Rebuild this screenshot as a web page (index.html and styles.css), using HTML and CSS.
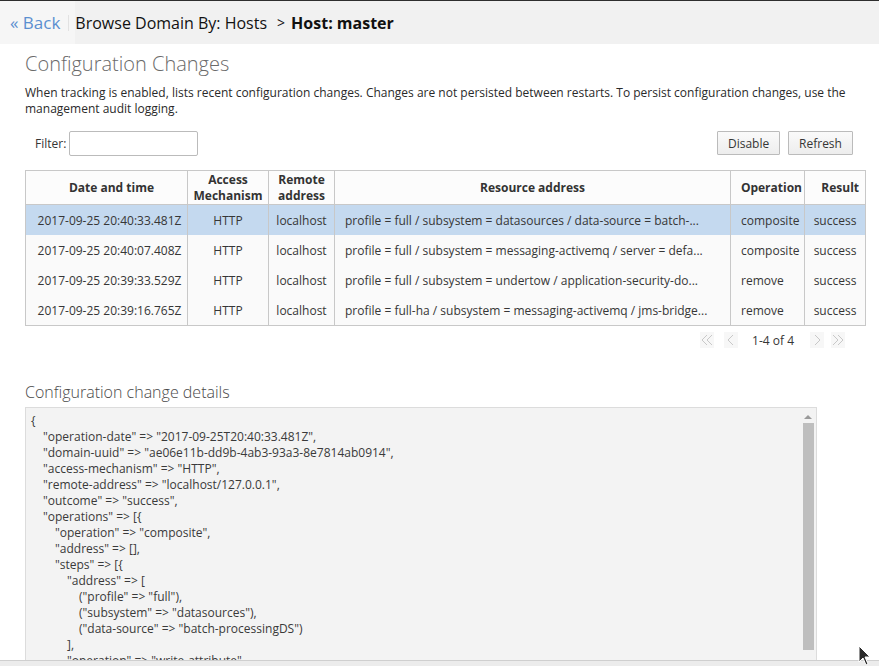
FILE: index.html
```html
<!DOCTYPE html>
<html>
<head>
<meta charset="utf-8">
<link rel="stylesheet" href="styles.css">
</head>
<body>
<div class="page">
  <header class="topbar">
    <a class="back"><span class="laquo">«</span> Back</a>
    <span class="sep"></span>
    <span class="crumb">Browse Domain By: Hosts</span>
    <span class="chev">&gt;</span>
    <span class="crumb strong">Host: master</span>
  </header>
  <main class="content">
    <h1 class="title">Configuration Changes</h1>
    <p class="desc">When tracking is enabled, lists recent configuration changes. Changes are not persisted between restarts. To persist configuration changes, use the management audit logging.</p>
    <div class="toolbar">
      <label class="filter">Filter: <input class="filter-input" type="text"></label>
      <div class="actions">
        <button class="btn btn-disable">Disable</button>
        <button class="btn btn-refresh">Refresh</button>
      </div>
    </div>
    <table class="grid">
      <colgroup>
        <col class="c-date"><col class="c-mech"><col class="c-remote"><col class="c-res"><col class="c-op"><col class="c-result">
      </colgroup>
      <thead>
        <tr>
          <th class="th-date">Date and time</th>
          <th>Access<br>Mechanism</th>
          <th>Remote<br>address</th>
          <th>Resource address</th>
          <th class="th-op">Operation</th>
          <th class="th-result">Result</th>
        </tr>
      </thead>
      <tbody>
        <tr class="selected">
          <td class="center date">2017-09-25 20:40:33.481Z</td>
          <td class="center">HTTP</td>
          <td class="center">localhost</td>
          <td class="res">profile = full / subsystem = datasources / data-source = batch-...</td>
          <td>composite</td>
          <td class="center">success</td>
        </tr>
        <tr>
          <td class="center date">2017-09-25 20:40:07.408Z</td>
          <td class="center">HTTP</td>
          <td class="center">localhost</td>
          <td class="res">profile = full / subsystem = messaging-activemq / server = defa...</td>
          <td>composite</td>
          <td class="center">success</td>
        </tr>
        <tr>
          <td class="center date">2017-09-25 20:39:33.529Z</td>
          <td class="center">HTTP</td>
          <td class="center">localhost</td>
          <td class="res">profile = full / subsystem = undertow / application-security-do...</td>
          <td>remove</td>
          <td class="center">success</td>
        </tr>
        <tr>
          <td class="center date">2017-09-25 20:39:16.765Z</td>
          <td class="center">HTTP</td>
          <td class="center">localhost</td>
          <td class="res">profile = full-ha / subsystem = messaging-activemq / jms-bridge...</td>
          <td>remove</td>
          <td class="center">success</td>
        </tr>
      </tbody>
    </table>
    <div class="pager">
      <span class="pg-btn pg-first"><svg width="12" height="12" viewBox="0 0 12 12"><polyline points="6,1 1,6 6,11" fill="none" stroke="#c8c8c8" stroke-width="1"/><polyline points="11,1 6,6 11,11" fill="none" stroke="#c8c8c8" stroke-width="1"/></svg></span>
      <span class="pg-btn pg-prev"><svg width="8" height="12" viewBox="0 0 8 12"><polyline points="6,1 1,6 6,11" fill="none" stroke="#c8c8c8" stroke-width="1"/></svg></span>
      <span class="pg-text">1-4 of 4</span>
      <span class="pg-btn pg-next"><svg width="8" height="12" viewBox="0 0 8 12"><polyline points="2,1 7,6 2,11" fill="none" stroke="#c8c8c8" stroke-width="1"/></svg></span>
      <span class="pg-btn pg-last"><svg width="12" height="12" viewBox="0 0 12 12"><polyline points="1,1 6,6 1,11" fill="none" stroke="#c8c8c8" stroke-width="1"/><polyline points="6,1 11,6 6,11" fill="none" stroke="#c8c8c8" stroke-width="1"/></svg></span>
    </div>
    <h2 class="subtitle">Configuration change details</h2>
    <div class="details">
      <div class="code">
        <div>{</div>
        <div class="i1">"operation-date" =&gt; "2017-09-25T20:40:33.481Z",</div>
        <div class="i1">"domain-uuid" =&gt; "ae06e11b-dd9b-4ab3-93a3-8e7814ab0914",</div>
        <div class="i1">"access-mechanism" =&gt; "HTTP",</div>
        <div class="i1">"remote-address" =&gt; "localhost/127.0.0.1",</div>
        <div class="i1">"outcome" =&gt; "success",</div>
        <div class="i1">"operations" =&gt; [{</div>
        <div class="i2">"operation" =&gt; "composite",</div>
        <div class="i2">"address" =&gt; [],</div>
        <div class="i2">"steps" =&gt; [{</div>
        <div class="i3">"address" =&gt; [</div>
        <div class="i4">("profile" =&gt; "full"),</div>
        <div class="i4">("subsystem" =&gt; "datasources"),</div>
        <div class="i4">("data-source" =&gt; "batch-processingDS")</div>
        <div class="i3">],</div>
        <div class="i3">"operation" =&gt; "write-attribute",</div>
        <div class="i3">"name" =&gt; "enabled",</div>
      </div>
      <div class="scroll">
        <span class="scroll-arrow"></span>
        <span class="scroll-thumb"></span>
      </div>
    </div>
  </main>
  <footer class="statusbar"></footer>
</div>
<svg class="cursor" width="14" height="22" viewBox="0 0 14 22"><path d="M1 1 L1 17 L5 13 L8 20 L10 19 L7 12 L12 12 Z" fill="#2b2b2b" stroke="#ffffff" stroke-width="1"/></svg>
</body>
</html>
```
FILE: styles.css
```css
html, body {
  margin: 0;
  padding: 0;
  height: 100%;
  overflow: hidden;
  background: #ffffff;
  font-family: "Open Sans", "Noto Sans", sans-serif;
  color: #363636;
}
.page {
  display: flex;
  flex-direction: column;
  height: 666px;
}
.topbar {
  flex: 0 0 auto;
  height: 43px;
  border-top: 1px solid #2e2e2e;
  background: #f1f1f1;
  display: flex;
  align-items: center;
  font-size: 16px;
  color: #111;
  background-image: linear-gradient(to right, #f6f6f6 0, #f6f6f6 75px, #f1f1f1 75px);
}
.back {
  color: #5b8fd0;
  padding-left: 10px;
  padding-right: 8px;
  font-size: 17px;
}
.sep {
  width: 1px;
  height: 16px;
  background: #e2e2e2;
  margin-right: 6px;
}
.chev {
  margin: 0 6px 0 10px;
  font-size: 14px;
}
.strong {
  font-weight: 700;
}
.content {
  flex: 1 1 auto;
  overflow: hidden;
  padding: 0 14px 0 25px;
}
.title {
  margin: 6px 0 0 0;
  font-size: 20px;
  font-weight: 300;
  color: #6a6a6a;
  line-height: 28px;
}
.desc {
  margin: 7px 0 0 0;
  font-size: 12px;
  line-height: 16px;
  color: #2a2a2a;
}
.toolbar {
  display: flex;
  justify-content: space-between;
  align-items: center;
  margin-top: 13px;
  height: 26px;
}
.filter {
  font-size: 12px;
  color: #363636;
  padding-left: 10px;
  display: flex;
  align-items: center;
}
.filter-input {
  margin-left: 3px;
  width: 129px;
  height: 25px;
  box-sizing: border-box;
  border: 1px solid #bbbbbb;
  border-radius: 2px;
  padding: 0;
}
.actions {
  display: flex;
  gap: 8px;
  padding-right: 12px;
}
.btn {
  font-family: "Open Sans", "Noto Sans", sans-serif;
  font-size: 12px;
  color: #363636;
  height: 24px;
  padding: 0 10px;
  border: 1px solid #bbbbbb;
  border-radius: 1px;
  background: linear-gradient(#fafafa, #ededed);
}
.btn-disable { width: 63px; }
.btn-refresh { width: 65px; }
.grid {
  margin-top: 14px;
  width: 840px;
  border-collapse: collapse;
  table-layout: fixed;
  font-size: 12px;
  border: 1px solid #c8c8c8;
}
.c-date { width: 162px; }
.c-mech { width: 81px; }
.c-remote { width: 66px; }
.c-res { width: 396px; }
.c-op { width: 74px; }
.c-result { width: 61px; }
.grid th {
  height: 33px;
  padding: 0 2px;
  font-weight: 700;
  color: #333;
  line-height: 16px;
  border: 1px solid #c8c8c8;
  background: #fcfcfc;
  text-align: center;
}
.grid th.th-date { padding-left: 12px; }
.grid th.th-op { text-align: right; padding-right: 2px; }
.grid th.th-result { text-align: right; padding-right: 6px; }
.grid td {
  height: 30px;
  padding: 0 10px;
  white-space: nowrap;
  overflow: hidden;
  color: #363636;
  border-left: 1px solid #c8c8c8;
  border-right: 1px solid #c8c8c8;
  background: #fafafa;
}
.grid td.center { text-align: center; padding: 0 4px; }
.grid td.date { padding-left: 8px; padding-right: 2px; }
.grid td.res { padding-left: 10px; }
.grid tr.selected td { background: #c4d9ef; }
.pager {
  display: flex;
  justify-content: flex-end;
  align-items: center;
  height: 28px;
  padding-right: 20px;
  font-size: 12px;
  color: #363636;
}
.pg-btn {
  display: flex;
  align-items: center;
  justify-content: center;
  width: 14px;
  height: 16px;
  background: #f7f7f7;
}
.pg-prev { margin-left: 10px; }
.pg-text { margin: 0 16px 0 14px; }
.pg-last { margin-left: 7px; }
.subtitle {
  margin: 26px 0 0 0;
  font-size: 16px;
  font-weight: 300;
  color: #4a4a4a;
  line-height: 24px;
}
.details {
  margin-top: 3px;
  width: 790px;
  height: 300px;
  border: 1px solid #dcdcdc;
  background: #f3f3f3;
  display: flex;
}
.code {
  flex: 1 1 auto;
  padding: 5px 0 0 5px;
  font-size: 12px;
  line-height: 16px;
  color: #3a3a3a;
}
.i1 { padding-left: 12px; }
.i2 { padding-left: 24px; }
.i3 { padding-left: 36px; }
.i4 { padding-left: 48px; }
.scroll {
  flex: 0 0 14px;
  display: flex;
  flex-direction: column;
  align-items: center;
  padding: 4px 0 0 0;
  margin-right: 1px;
}
.scroll-arrow {
  width: 0;
  height: 0;
  border-left: 4px solid transparent;
  border-right: 4px solid transparent;
  border-bottom: 4px solid #9a9a9a;
  margin-top: 3px;
}
.scroll-thumb {
  margin-top: 4px;
  width: 11px;
  height: 227px;
  background: #bebebe;
}
.statusbar {
  flex: 0 0 5px;
  border-top: 1px solid #cfcfcf;
  background: #ececec;
}
.cursor {
  position: absolute;
  left: 858px;
  top: 645px;
}
```
